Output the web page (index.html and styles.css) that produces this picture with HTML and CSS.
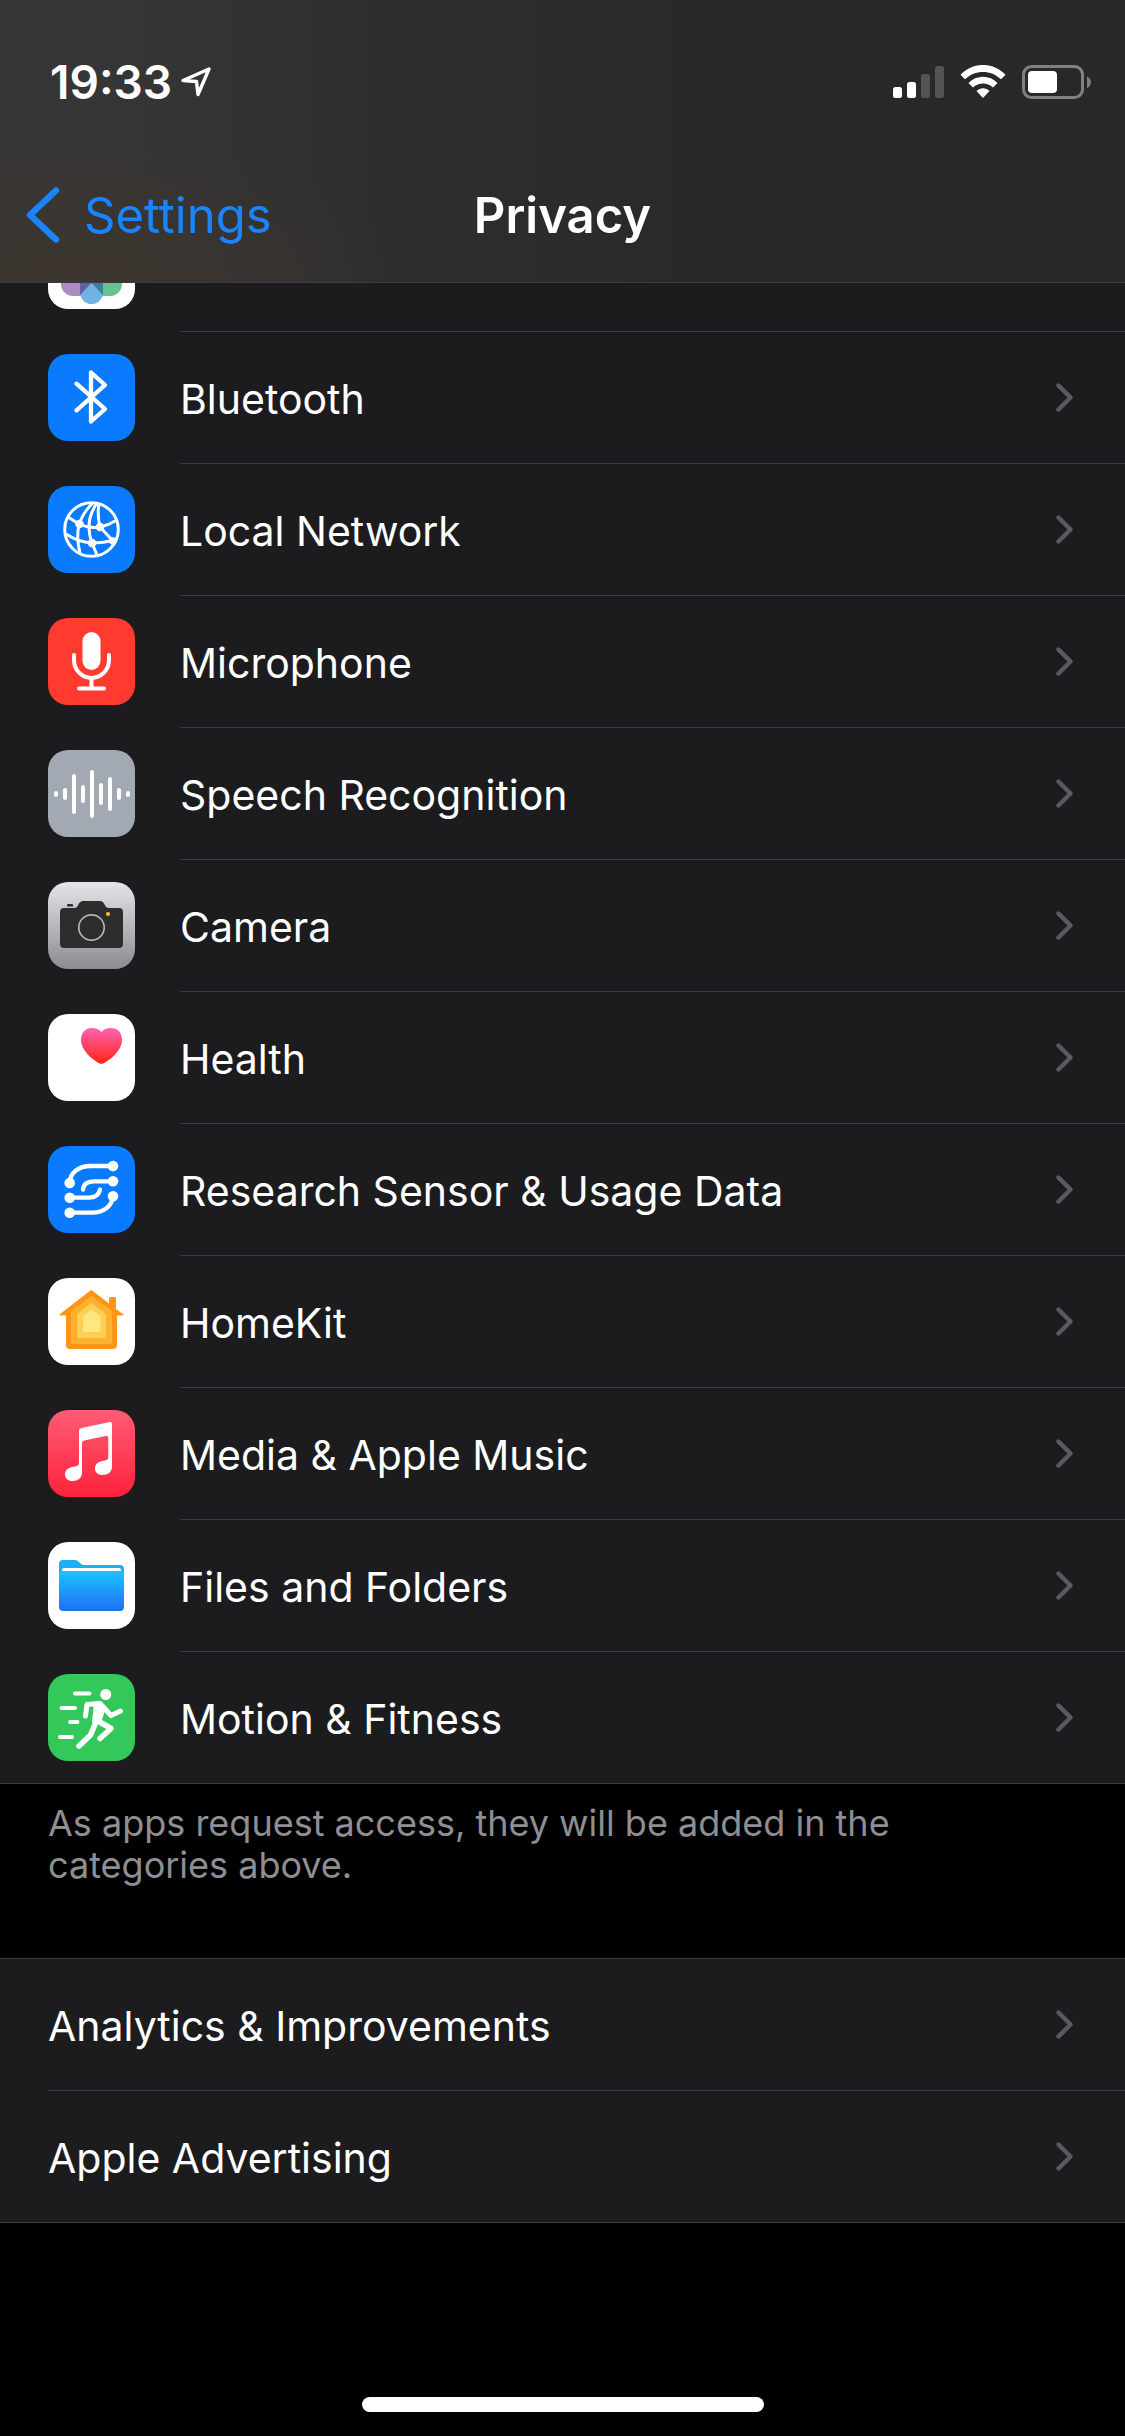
FILE: index.html
```html
<!DOCTYPE html>
<html lang="en">
<head>
    <meta charset="UTF-8">
    <meta name="viewport" content="width=device-width, initial-scale=1.0">
    <title>Privacy</title>
    <link rel="stylesheet" href="styles.css">
</head>
<body>
    <!-- chevron shared by all rows -->
    <svg class="defs" width="0" height="0" aria-hidden="true">
        <symbol id="chevron" viewBox="0 0 17 29">
            <path d="M2.5 2.5 L14.5 14.5 L2.5 26.5" fill="none" stroke="currentColor" stroke-width="4.4" stroke-linecap="round" stroke-linejoin="round"/>
        </symbol>
    </svg>

    <header class="header">
        <div class="status-bar">
            <div class="status-left">
                <span class="time">19:33</span>
                <svg class="location" width="32" height="32" viewBox="0 0 32 32" aria-hidden="true">
                    <path d="M29 3 L18 28.500 L16.500 15.500 L3 14.500 Z" fill="none" stroke="#fff" stroke-width="3.4" stroke-linejoin="round"/>
                </svg>
            </div>
            <div class="status-right">
                <svg width="51" height="34" viewBox="0 0 51 34" aria-hidden="true">
                    <rect x="0" y="22" width="9" height="11" rx="2.500" fill="#fff"/>
                    <rect x="14" y="17" width="9" height="16" rx="2.500" fill="#fff"/>
                    <rect x="28" y="9" width="9" height="24" rx="2.500" fill="#545454"/>
                    <rect x="42" y="1" width="9" height="32" rx="2.500" fill="#545454"/>
                </svg>
                <svg width="46" height="34" viewBox="0 0 46 34" aria-hidden="true">
                    <path d="M0.500 9.800 C13 -3.300 33 -3.300 45.500 9.800 L41 14.300 C31 4.500 15 4.500 5 14.300 Z" fill="#fff"/>
                    <path d="M8.500 18 C16.500 9.700 29.500 9.700 37.500 18 L33 22.500 C27.500 17 18.500 17 13 22.500 Z" fill="#fff"/>
                    <path d="M16.500 26 C20.500 22.300 25.500 22.300 29.500 26 L23 33 Z" fill="#fff"/>
                </svg>
                <svg width="70" height="34" viewBox="0 0 70 34" aria-hidden="true">
                    <rect x="1.500" y="1.500" width="59" height="31" rx="8" fill="none" stroke="#808080" stroke-width="3"/>
                    <rect x="6" y="6" width="29" height="22" rx="4" fill="#fff"/>
                    <path d="M65 11.500 C70.300 14 70.300 20.500 65 23 Z" fill="#808080"/>
                </svg>
            </div>
        </div>
        <nav class="nav-bar">
            <a class="back" href="#settings">
                <svg width="34" height="56" viewBox="0 0 34 56" aria-hidden="true">
                    <path d="M30 3.500 L4 28 L30 52.500" fill="none" stroke="#1a84ff" stroke-width="6.500" stroke-linecap="round" stroke-linejoin="round"/>
                </svg>
                <span>Settings</span>
            </a>
            <h1 class="title">Privacy</h1>
        </nav>
    </header>

    <main class="content">
        <ul class="group apps">
            <li>
                <a class="row" href="#photos">
                    <svg class="icon white" viewBox="0 0 87 87" aria-hidden="true">
                        <rect x="13" y="47" width="31" height="27" rx="12" fill="#ab8cc4"/>
                        <rect x="43" y="47" width="31" height="27" rx="12" fill="#66c193"/>
                        <rect x="32" y="48" width="23" height="34" rx="11.500" fill="#71b3e3"/>
                        <path d="M32 50 H43.500 V61 L32 73 Z" fill="#6060a5"/>
                        <path d="M55 50 H43.500 V61 L55 73 Z" fill="#3b7f9b"/>
                    </svg>
                    <span class="label">Photos</span>
                    <svg class="chevron"><use href="#chevron"/></svg>
                </a>
            </li>
            <li>
                <a class="row" href="#bluetooth">
                    <svg class="icon blue" viewBox="0 0 87 87" aria-hidden="true">
                        <path d="M28.500 29.700 L57 55 L43 67.500 V18.500 L57 31 L28.500 56.300" fill="none" stroke="#fff" stroke-width="4.300" stroke-linecap="round" stroke-linejoin="round"/>
                    </svg>
                    <span class="label">Bluetooth</span>
                    <svg class="chevron"><use href="#chevron"/></svg>
                </a>
            </li>
            <li>
                <a class="row" href="#local-network">
                    <svg class="icon blue" viewBox="0 0 87 87" aria-hidden="true">
                        <g fill="none" stroke="#fff" stroke-width="3">
                            <circle cx="43.500" cy="43.500" r="26.800"/>
                            <path d="M20 31 L31 38 Q42 43 52 41 Q61 39 69 34"/>
                            <path d="M31 38 Q36 25 45 17"/>
                            <path d="M31 38 Q28 52 32 67"/>
                            <path d="M49 17 Q36 36 44 57 L49 69"/>
                            <path d="M52 41 Q49 29 51 18"/>
                            <path d="M52 41 L65 55"/>
                            <path d="M18 48 Q30 56 44 57 Q56 57 66 54"/>
                        </g>
                        <g fill="#fff">
                            <circle cx="31.500" cy="38" r="4.300"/>
                            <circle cx="52" cy="41" r="4.300"/>
                            <circle cx="44" cy="57" r="4.300"/>
                            <circle cx="65" cy="55" r="3.800"/>
                        </g>
                    </svg>
                    <span class="label">Local Network</span>
                    <svg class="chevron"><use href="#chevron"/></svg>
                </a>
            </li>
            <li>
                <a class="row" href="#microphone">
                    <svg class="icon red" viewBox="0 0 87 87" aria-hidden="true">
                        <rect x="34.500" y="14" width="18" height="38" rx="9" fill="#fff"/>
                        <path d="M26 37 V42 A17.500 18 0 0 0 61 42 V37 M43.500 60 V70 M31 70.500 H56" fill="none" stroke="#fff" stroke-width="4" stroke-linecap="round"/>
                    </svg>
                    <span class="label">Microphone</span>
                    <svg class="chevron"><use href="#chevron"/></svg>
                </a>
            </li>
            <li>
                <a class="row" href="#speech">
                    <svg class="icon grey" viewBox="0 0 87 87" aria-hidden="true">
                        <path d="M8 43 V45 M17 40 V48 M26 26 V62 M35 37 V51 M44 22 V66 M53 35 V53 M62 29 V59 M71 40 V48 M80 43 V45" fill="none" stroke="#fff" stroke-width="4" stroke-linecap="round"/>
                    </svg>
                    <span class="label">Speech Recognition</span>
                    <svg class="chevron"><use href="#chevron"/></svg>
                </a>
            </li>
            <li>
                <a class="row" href="#camera">
                    <svg class="icon camera" viewBox="0 0 87 87" aria-hidden="true">
                        <path d="M16 26 H26 Q29 26 30.500 22.500 Q32 19 35 19 H52 Q55 19 56.500 22.500 Q58 26 61 26 H71 Q75 26 75 30 V62 Q75 66 71 66 H16 Q12 66 12 62 V30 Q12 26 16 26 Z" fill="#2d2d2d"/>
                        <path d="M19 24.500 V23 Q19 22 20 22 H24 Q25 22 25 23 V24.500 Z" fill="#2d2d2d"/>
                        <circle cx="43.500" cy="45.500" r="12.700" fill="none" stroke="#b4b4b9" stroke-width="1.700"/>
                        <circle cx="60" cy="32" r="2" fill="#ffc60a"/>
                    </svg>
                    <span class="label">Camera</span>
                    <svg class="chevron"><use href="#chevron"/></svg>
                </a>
            </li>
            <li>
                <a class="row" href="#health">
                    <svg class="icon white" viewBox="0 0 87 87" aria-hidden="true">
                        <linearGradient id="heart" x1="0" y1="0" x2="0" y2="1">
                            <stop offset="0" stop-color="#ff63b4"/>
                            <stop offset="1" stop-color="#ff2412"/>
                        </linearGradient>
                        <path d="M53.500 50 C51 50 33 39 33 26 C33 18 38 14 44 14 C48 14 51.500 15.500 53.500 18 C55.500 15.500 59 14 63 14 C69 14 74 18 74 26 C74 39 56 50 53.500 50 Z" fill="url(#heart)"/>
                    </svg>
                    <span class="label">Health</span>
                    <svg class="chevron"><use href="#chevron"/></svg>
                </a>
            </li>
            <li>
                <a class="row" href="#research">
                    <svg class="icon blue" viewBox="0 0 87 87" aria-hidden="true">
                        <path d="M65 20 H43 C30 20 22 27 21.700 37 M65 35.300 H46 C39 35.300 35.500 38 35 43.500 M21.700 51.700 H41 C48 51.700 51 48.500 52 43.500 M21.700 66.700 H44 C56 66.700 64 60 65 50.300" fill="none" stroke="#fff" stroke-width="4.300" stroke-linecap="round"/>
                        <g fill="#fff">
                            <circle cx="65" cy="20" r="5.300"/>
                            <circle cx="21.700" cy="37" r="5.300"/>
                            <circle cx="65" cy="35.300" r="5.300"/>
                            <circle cx="21.700" cy="51.700" r="5.300"/>
                            <circle cx="65" cy="50.300" r="5.300"/>
                            <circle cx="21.700" cy="66.700" r="5.300"/>
                        </g>
                    </svg>
                    <span class="label">Research Sensor &amp; Usage Data</span>
                    <svg class="chevron"><use href="#chevron"/></svg>
                </a>
            </li>
            <li>
                <a class="row" href="#homekit">
                    <svg class="icon white" viewBox="0 0 87 87" aria-hidden="true">
                        <path d="M43.500 12 L61 25.500 V20.500 Q61 19 62.500 19 H66.500 Q68 19 68 20.500 V31 L75.500 36.500 Q76 37.500 75 37.500 H69 V67 Q69 71 65 71 H22 Q18 71 18 67 V37.500 H12 Q11 37.500 11.500 36.500 L42 12.800 Z" fill="#ff9417"/>
                        <path d="M43.500 18 L64 33 V64 Q64 66 62 66 H25 Q23 66 23 64 V33 Z" fill="#ffb02f"/>
                        <path d="M43.500 25 L58 36 V60 H29 V36 Z" fill="#ffce54"/>
                        <path d="M43.500 32 L52.500 38.500 V54 H35 V38.500 Z" fill="#ffe67d"/>
                    </svg>
                    <span class="label">HomeKit</span>
                    <svg class="chevron"><use href="#chevron"/></svg>
                </a>
            </li>
            <li>
                <a class="row" href="#media">
                    <svg class="icon music" viewBox="0 0 87 87" aria-hidden="true">
                        <path d="M31 20.500 Q31 18.500 33.500 18 L62 12 Q64 11.600 64 13.800 V57 C64 62 59.500 65 54.500 65 C50 65 47 62.500 47 58.500 C47 54.500 50 51.800 54 51 L58 50.200 Q60.300 49.700 60.300 47.500 V28 Q60.300 25.500 58 26 L36 30.500 Q34 31 34 33 V63 C34 68 29.500 71 24.500 71 C20 71 17 68.500 17 64.500 C17 60.500 20 57.800 24 57 L28 56.200 Q31 55.500 31 53 Z" fill="#fff"/>
                    </svg>
                    <span class="label">Media &amp; Apple Music</span>
                    <svg class="chevron"><use href="#chevron"/></svg>
                </a>
            </li>
            <li>
                <a class="row" href="#files">
                    <svg class="icon white" viewBox="0 0 87 87" aria-hidden="true">
                        <linearGradient id="folder" x1="0" y1="0" x2="0" y2="1">
                            <stop offset="0" stop-color="#1ac4ff"/>
                            <stop offset="1" stop-color="#2070f3"/>
                        </linearGradient>
                        <path d="M11 32 V22 Q11 18 15 18 H27 Q29.500 18 31.500 20.500 Q33.500 23 36 23 H72 Q76 23 76 27 V32 Z" fill="#1fadf5"/>
                        <path d="M14 32 V28 Q14 26 16 26 H71 Q73 26 73 28 V32 Z" fill="#fff"/>
                        <path d="M11 29 H76 V65 Q76 69 72 69 H15 Q11 69 11 65 Z" fill="url(#folder)"/>
                    </svg>
                    <span class="label">Files and Folders</span>
                    <svg class="chevron"><use href="#chevron"/></svg>
                </a>
            </li>
            <li>
                <a class="row" href="#motion">
                    <svg class="icon green" viewBox="0 0 87 87" aria-hidden="true">
                        <circle cx="57.700" cy="20.500" r="5.500" fill="#fff"/>
                        <g fill="none" stroke="#fff" stroke-linecap="round" stroke-linejoin="round">
                            <path d="M27 19.500 H41.500 M13.500 34 H27 M22 48 H29.500 M12 63 H24" stroke-width="4"/>
                            <path d="M37.500 42 L39 30.500 L52 29.500 L63 41.500 L72.500 37" stroke-width="5"/>
                            <path d="M50 47 L63 54.500 L52 64.500" stroke-width="5.500"/>
                            <path d="M48 48 L42.500 61 L31 72" stroke-width="5.500"/>
                        </g>
                        <path d="M46 29 L58 33 L54 46 L46 51 L44 48 Z" fill="#fff"/>
                    </svg>
                    <span class="label">Motion &amp; Fitness</span>
                    <svg class="chevron"><use href="#chevron"/></svg>
                </a>
            </li>
        </ul>
        <p class="note">As apps request access, they will be added in the categories above.</p>

        <ul class="group">
            <li>
                <a class="row" href="#analytics">
                    <span class="label">Analytics &amp; Improvements</span>
                    <svg class="chevron"><use href="#chevron"/></svg>
                </a>
            </li>
            <li>
                <a class="row" href="#advertising">
                    <span class="label">Apple Advertising</span>
                    <svg class="chevron"><use href="#chevron"/></svg>
                </a>
            </li>
        </ul>
    </main>
    <div class="home-indicator"></div>
</body>
</html>
```
FILE: styles.css
```css
* {
    box-sizing: border-box;
}
body {
    margin: 0;
    min-height: 100vh;
    display: flex;
    flex-direction: column;
    background: #000;
    color: #fff;
    font-family: Inter, "Liberation Sans", sans-serif;
}
.defs {
    display: none;
}
a {
    color: inherit;
    text-decoration: none;
}
.header {
    position: sticky;
    top: 0;
    z-index: 1;
    background:
        radial-gradient(ellipse 320px 150px at 80px 282px, #3d352e 0%, transparent 100%),
        linear-gradient(90deg, #373636 0, #353535 12%, #2e2e2e 35%, #292929 62%, #282828 100%);
    border-bottom: 1px solid #3d3d41;
}
.status-bar {
    display: flex;
    justify-content: space-between;
    align-items: center;
    height: 132px;
    padding: 32px 33px 0 50px;
}
.status-left {
    display: flex;
    align-items: center;
    gap: 8px;
}
.time {
    font-size: 46px;
    font-weight: 600;
}
.status-right {
    display: flex;
    align-items: center;
    gap: 16px;
}
.nav-bar {
    display: grid;
    grid-template-columns: 1fr auto 1fr;
    align-items: center;
    height: 150px;
    padding: 16px 26px 0;
}
.back {
    display: flex;
    align-items: center;
    gap: 24px;
    color: #1a84ff;
    font-size: 49px;
}
.title {
    margin: 0;
    font-size: 49px;
    font-weight: 600;
}
/* the list is scrolled, its first row sits partly under the header */
.content {
    margin-top: -84px;
}
.group {
    margin: 0;
    padding: 0;
    list-style: none;
    background: #1c1c1e;
    border: solid #3d3d41;
    border-width: 1px 0;
}
.row {
    display: flex;
    align-items: center;
    height: 131px;
    padding-left: 48px;
}
.icon {
    flex: none;
    width: 87px;
    height: 87px;
    margin-right: 45px;
    border-radius: 20px;
}
.label {
    flex: 1;
    padding-top: 2px;
    font-size: 41px;
    line-height: 50px;
}
.chevron {
    width: 17px;
    height: 29px;
    margin-right: 52px;
    color: #5a5a5e;
}
.group li + li::before {
    content: "";
    display: block;
    height: 1px;
    margin-left: 48px;
    background: #3d3d41;
}
.apps li + li::before {
    margin-left: 180px;
}
.blue {
    background: #0a7aff;
}
.red {
    background: #ff3b30;
}
.grey {
    background: #a2a9b3;
}
.green {
    background: #34c759;
}
.white {
    background: #fff;
}
.camera {
    background: linear-gradient(#e5e4ea, #8c8b90);
}
.music {
    background: linear-gradient(#ff5c74, #fc233b);
}
.note {
    max-width: 960px;
    margin: 0;
    padding: 18px 48px 72px;
    color: #8e8e93;
    font-size: 36px;
    line-height: 42px;
}
.home-indicator {
    width: 402px;
    height: 15px;
    margin: auto auto 24px;
    border-radius: 8px;
    background: #fff;
}
```
